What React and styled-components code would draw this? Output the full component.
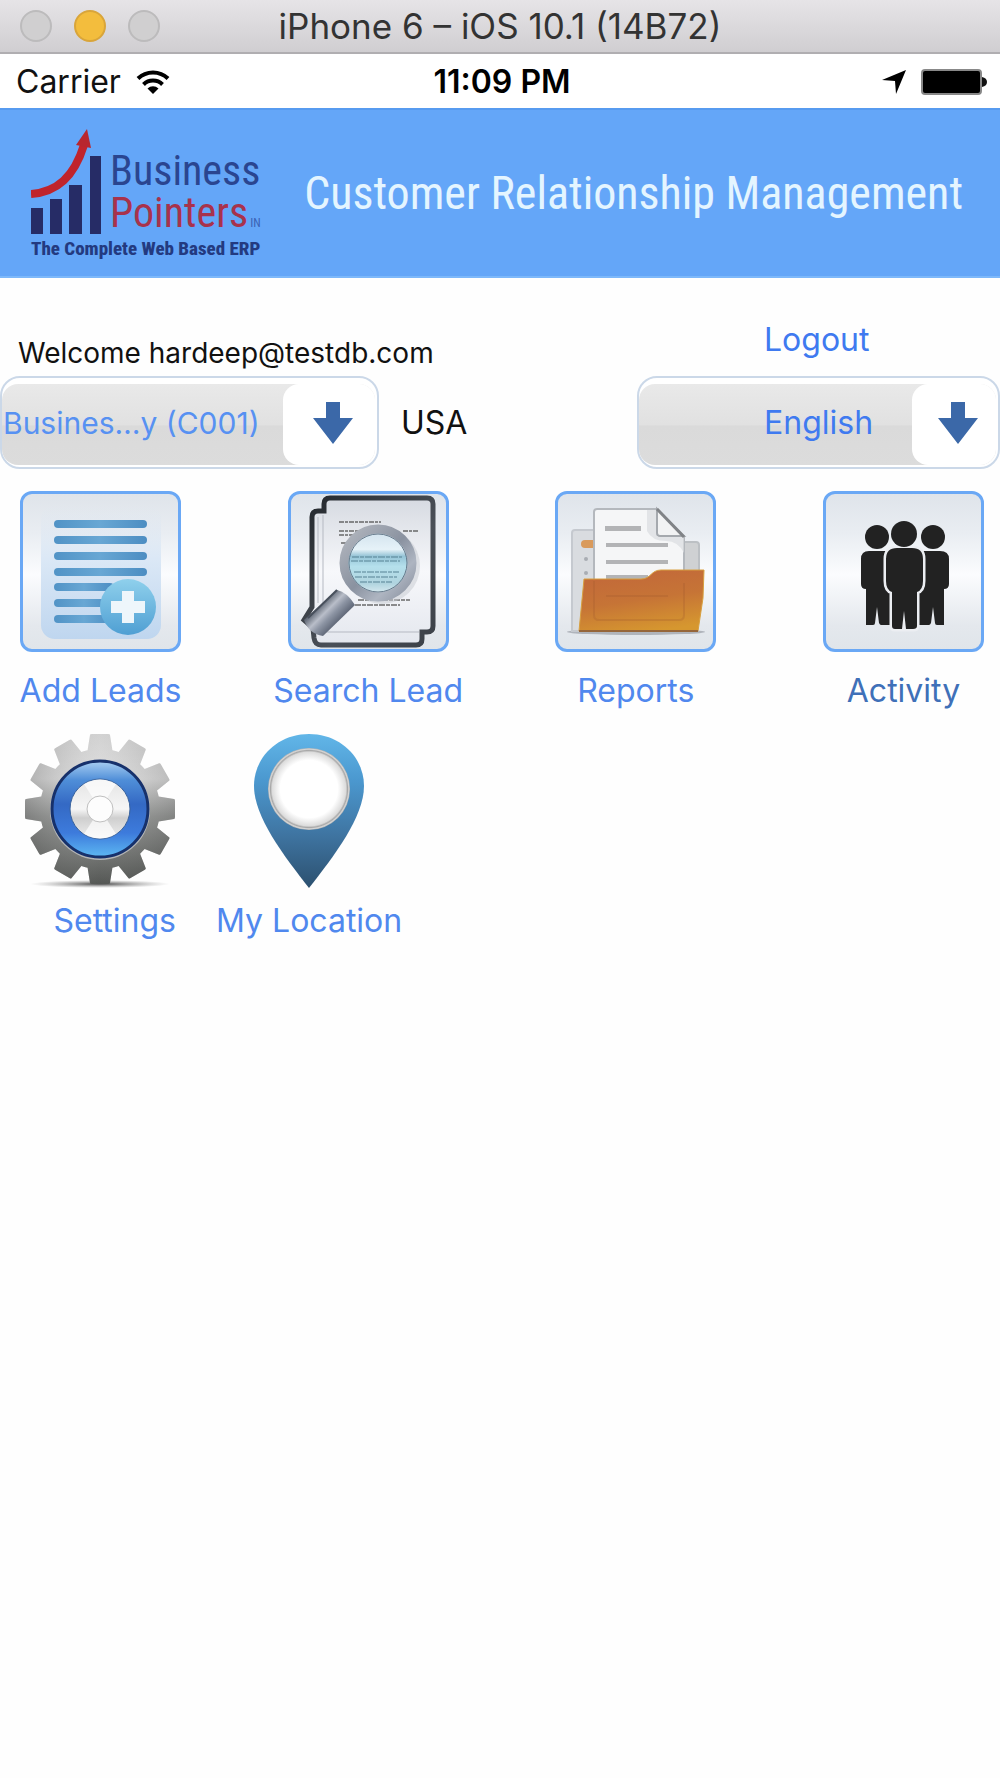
import React from "react";
import styled, { createGlobalStyle } from "styled-components";

const App = () => {
  return (
    <>
      <GlobalStyle />
      <WindowBar>
        <Lights>
          <Light type="button" aria-label="Close" />
          <Light type="button" aria-label="Minimize" $active />
          <Light type="button" aria-label="Zoom" />
        </Lights>
        <WindowTitle>iPhone 6 – iOS 10.1 (14B72)</WindowTitle>
      </WindowBar>

      <StatusBar>
        <StatusSide>
          <span>Carrier</span>
          <WifiIcon />
        </StatusSide>
        <Clock>11:09 PM</Clock>
        <StatusSide $end>
          <LocationIcon />
          <BatteryIcon />
        </StatusSide>
      </StatusBar>

      <Banner>
        <Logo>
          <ChartLogo />
          <Brand>
            <BrandLine $color="#2a4590">Business</BrandLine>
            <BrandLine $color="#a8324c">
              Pointers<small>IN</small>
            </BrandLine>
          </Brand>
          <Tagline>The Complete Web Based ERP</Tagline>
        </Logo>
        <BannerTitle>Customer Relationship Management</BannerTitle>
      </Banner>

      <main>
        <Account>
          <Welcome>Welcome hardeep@testdb.com</Welcome>
          <Logout href="#logout">Logout</Logout>
          <CompanyRow>
            <Picker $width="379px">
              <Select aria-label="Company" $color="#5791f2" $indent="1px" $size="30px">
                <option>Busines…y (C001)</option>
              </Select>
              <PickerArrow width="92px" />
            </Picker>
            <span>USA</span>
          </CompanyRow>
          <Picker $width="100%">
            <Select aria-label="Language" $color="#3f7af0" $indent="125px" $size="32px">
              <option>English</option>
            </Select>
            <PickerArrow width="84px" />
          </Picker>
        </Account>

        <Tiles>
          <Shortcut type="button">
            <Tile>
              <AddLeadsIcon />
            </Tile>
            <Label>Add Leads</Label>
          </Shortcut>
          <Shortcut type="button">
            <Tile>
              <SearchLeadIcon />
            </Tile>
            <Label>Search Lead</Label>
          </Shortcut>
          <Shortcut type="button">
            <Tile>
              <ReportsIcon />
            </Tile>
            <Label>Reports</Label>
          </Shortcut>
          <Shortcut type="button">
            <Tile>
              <ActivityIcon />
            </Tile>
            <Label $color="#3f70b8">Activity</Label>
          </Shortcut>
        </Tiles>

        <MoreRow>
          <PlainShortcut type="button" $align="flex-end">
            <GearIcon />
            <Label>Settings</Label>
          </PlainShortcut>
          <PlainShortcut type="button" $align="center">
            <PinIcon />
            <Label>My Location</Label>
          </PlainShortcut>
        </MoreRow>
      </main>
    </>
  );
};

export default App;

const PickerArrow = ({ width }) => (
  <ArrowBox $width={width}>
    <svg width="42" height="42" viewBox="0 0 42 42" aria-hidden="true">
      <path d="M14 0h14v16h13L21 42 1 16h13z" fill="#3b68a8" />
    </svg>
  </ArrowBox>
);

const WifiIcon = () => (
  <svg width="34" height="26" viewBox="0 0 34 26" aria-hidden="true">
    <g fill="none" stroke="#000" strokeWidth="4">
      <path d="M2 9.500a21.500 21.500 0 0 1 30 0" />
      <path d="M7.500 15.500a13.500 13.500 0 0 1 19 0" />
    </g>
    <path d="M11.500 19.500a8 8 0 0 1 11 0L17 25z" fill="#000" />
  </svg>
);

const LocationIcon = () => (
  <svg width="24" height="24" viewBox="0 0 24 24" aria-hidden="true">
    <path d="M24 0L14 24 13 11 0 10z" fill="#000" />
  </svg>
);

const BatteryIcon = () => (
  <svg width="67" height="26" viewBox="0 0 67 26" aria-hidden="true">
    <rect x="1" y="1" width="59" height="24" rx="3" fill="#000" stroke="#888" strokeWidth="2" />
    <path d="M61 8q5 1 5 5t-5 5z" fill="#111" />
  </svg>
);

const ChartLogo = () => (
  <svg width="74" height="106" viewBox="0 0 74 106" aria-hidden="true">
    <g fill="#262c66">
      <rect x="0" y="79" width="12" height="26" />
      <rect x="19" y="70" width="12" height="35" />
      <rect x="38" y="56" width="13" height="49" />
      <rect x="59" y="27" width="11" height="78" />
    </g>
    <path d="M0 65C26 63 43 48 53 16" fill="none" stroke="#c0242c" strokeWidth="8" />
    <path d="M56 0L45 16l15 3z" fill="#b8262e" />
  </svg>
);

const AddLeadsIcon = () => (
  <svg viewBox="3 3 155 155" aria-hidden="true">
    <defs>
      <linearGradient id="sheet" x1="0" y1="0" x2="0" y2="1">
        <stop offset="0" stopColor="#dde6f0" stopOpacity="0" />
        <stop offset="0.4" stopColor="#dbe8f6" />
        <stop offset="1" stopColor="#bfd6ef" />
      </linearGradient>
      <linearGradient id="rule" x1="0" y1="0" x2="1" y2="0">
        <stop offset="0" stopColor="#5193c6" />
        <stop offset="0.5" stopColor="#68a7d4" />
        <stop offset="1" stopColor="#4c8dc2" />
      </linearGradient>
      <linearGradient id="badge" x1="0" y1="0" x2="0" y2="1">
        <stop offset="0" stopColor="#8fd0ec" />
        <stop offset="1" stopColor="#4f9fd3" />
      </linearGradient>
    </defs>
    <rect x="21" y="14" width="120" height="134" rx="14" fill="url(#sheet)" />
    {[29, 45, 61, 77, 92, 108, 124].map((y, i) => (
      <rect key={y} x="34" y={y} width={i < 4 ? 93 : 60} height="8" rx="4" fill="url(#rule)" />
    ))}
    <circle cx="108" cy="116" r="28" fill="url(#badge)" />
    <path d="M102 100h12v10h11v12h-11v10h-12v-10H91v-12h11z" fill="#eef6fb" />
  </svg>
);

const SearchLeadIcon = () => (
  <svg viewBox="3 3 155 155" aria-hidden="true">
    <defs>
      <linearGradient id="paper" x1="0" y1="0" x2="0" y2="1">
        <stop offset="0" stopColor="#d6dae1" />
        <stop offset="0.5" stopColor="#f7f8fb" />
        <stop offset="1" stopColor="#e4e7ee" />
      </linearGradient>
      <linearGradient id="edge" x1="0" y1="0" x2="1" y2="1">
        <stop offset="0" stopColor="#23272c" />
        <stop offset="0.6" stopColor="#4a5058" />
        <stop offset="1" stopColor="#3c4148" />
      </linearGradient>
      <linearGradient id="ring" x1="0" y1="0" x2="1" y2="1">
        <stop offset="0" stopColor="#b4b8c0" />
        <stop offset="0.5" stopColor="#8a92a0" />
        <stop offset="0.75" stopColor="#aeb5c1" />
        <stop offset="1" stopColor="#8a92a0" />
      </linearGradient>
      <linearGradient id="glass" x1="0" y1="0" x2="0" y2="1">
        <stop offset="0" stopColor="#cfe0ec" />
        <stop offset="0.3" stopColor="#e6f2f8" />
        <stop offset="0.4" stopColor="#94c3d6" />
        <stop offset="0.55" stopColor="#b5e0ec" />
        <stop offset="0.8" stopColor="#b0d4df" />
        <stop offset="1" stopColor="#e8f3f7" />
      </linearGradient>
      <linearGradient id="handle" gradientUnits="userSpaceOnUse" x1="34" y1="112" x2="52" y2="130">
        <stop offset="0" stopColor="#5f6774" />
        <stop offset="0.35" stopColor="#b9bec9" />
        <stop offset="0.6" stopColor="#8d95a4" />
        <stop offset="1" stopColor="#5c6474" />
      </linearGradient>
    </defs>
    <path
      d="M36 20V13q0-6 6-6h97q6 0 6 6v122q0 6-6 6h-5v7q0 6-6 6H33q-6 0-7-7l-1-10-9-8 8-13V26q0-6 6-6z"
      fill="url(#paper)"
      stroke="url(#edge)"
      strokeWidth="5"
    />
    <path d="M35 24v112q0 5 5 5h91M30 26v86" fill="none" stroke="#b5b9c2" strokeWidth="1" />
    <g stroke="#555" strokeWidth="2" opacity="0.65">
      <path d="M51 31h42M51 40h24M115 40h15M51 44h18M53 52h8" strokeDasharray="5 1 3 1" />
      <path d="M70 109h52M67 114h45" strokeDasharray="6 1 4 1" />
    </g>
    <circle cx="94" cy="75" r="38" fill="#c6c9d0" opacity="0.5" />
    <path d="M49 99q10 2 18 15L35 145q-14-2-19-16z" fill="url(#handle)" />
    <path d="M49 99L20 127" stroke="#48505c" strokeWidth="2" />
    <circle cx="90" cy="72" r="34" fill="url(#glass)" stroke="url(#ring)" strokeWidth="9" />
    <circle cx="90" cy="72" r="29" fill="none" stroke="#66798a" strokeWidth="1" />
    <g stroke="#578395" strokeWidth="2" opacity="0.5">
      <path d="M64 66h50M63 70h49M66 81h45M67 86h42M72 91h32" strokeDasharray="7 1 4 1" />
    </g>
  </svg>
);

const ReportsIcon = () => (
  <svg viewBox="3 3 155 155" aria-hidden="true">
    <defs>
      <linearGradient id="folder" x1="0.3" y1="0" x2="0.6" y2="1">
        <stop offset="0" stopColor="#c2683a" />
        <stop offset="0.5" stopColor="#c67436" />
        <stop offset="1" stopColor="#d6972f" />
      </linearGradient>
    </defs>
    <ellipse cx="81" cy="141" rx="69" ry="3" fill="#8d939b" opacity="0.6" />
    <path d="M17 140V42q0-3 3-3h50v101z" fill="#d9dce0" stroke="#c5c9cf" strokeWidth="2" />
    <path d="M120 51h21q3 0 3 3v40h-24z" fill="#cfd1d3" stroke="#bcc0c4" strokeWidth="2" />
    <rect x="26" y="49" width="20" height="8" rx="4" fill="#d99a5c" />
    <circle cx="31" cy="68" r="2" fill="#a9adb3" />
    <circle cx="31" cy="82" r="2" fill="#a9adb3" />
    <path d="M39 120V21q0-3 3-3h59l28 28v74z" fill="#f5f6f7" stroke="#b4b8bd" strokeWidth="2" />
    <path d="M92 19h10v27h27v16q-6-12-18-12-14 0-19-10z" fill="#dadddf" opacity="0.7" />
    <path d="M102 18v24q0 3 3 3h24z" fill="#f2f3f4" stroke="#a5a9ae" strokeWidth="2" />
    <path d="M102 18l27 28" stroke="#808387" strokeWidth="3" />
    <g fill="#b3b4b6">
      <rect x="50" y="35" width="36" height="5" />
      <rect x="51" y="52" width="62" height="4" />
      <rect x="51" y="69" width="62" height="4" />
      <rect x="51" y="84" width="42" height="4" />
    </g>
    <path
      d="M29 88h57c10 0 10-9 20-9h43l-1 28-5 33H24z"
      fill="url(#folder)"
      stroke="#d8a040"
      strokeWidth="1"
    />
    <path d="M39 90v34q0 5 5 5h80q5 0 5-5V92M51 105h62" fill="none" stroke="#a0562c" strokeWidth="2" opacity="0.25" />
    <path d="M24 140h119" stroke="#96663a" strokeWidth="2" />
  </svg>
);

const ActivityIcon = () => (
  <svg viewBox="3 3 155 155" aria-hidden="true">
    <g fill="#222">
      <circle cx="54" cy="46" r="12" />
      <circle cx="110" cy="46" r="12" />
      <path d="M46 60h22v74H58q-1 0-2-2l-2-16-2 16q0 2-2 2h-7V98q-5 0-5-5V68q0-8 8-8z" />
      <path d="M117 60H95v74h11q1 0 2-2l2-16 2 16q0 2 2 2h7V98q5 0 5-5V68q0-8-9-8z" />
    </g>
    <path
      d="M74 57h15q11 0 11 11v22q0 9-6 11v34q0 3-4 3h-7l-2-18-2 18h-7q-3 0-3-3v-34q-6-2-6-11V68q0-11 11-11z"
      fill="#222"
      stroke="#eceef2"
      strokeWidth="5"
      paintOrder="stroke"
    />
    <circle cx="81" cy="43" r="13" fill="#222" />
  </svg>
);

const TOOTH = "M63 20L66 1q0-1 2-1h16q2 0 2 1l3 19z";

const GearIcon = () => (
  <svg width="152" height="154" viewBox="0 0 152 154" aria-hidden="true">
    <defs>
      <linearGradient id="steel" gradientUnits="userSpaceOnUse" x1="0" y1="0" x2="0" y2="150">
        <stop offset="0" stopColor="#cdcdcd" />
        <stop offset="0.3" stopColor="#dcdcdc" />
        <stop offset="0.55" stopColor="#8d8f8d" />
        <stop offset="1" stopColor="#3a3d3a" />
      </linearGradient>
      <linearGradient id="sheen" x1="0" y1="0" x2="1" y2="0">
        <stop offset="0" stopColor="#666" stopOpacity="0.4" />
        <stop offset="0.5" stopColor="#eee" stopOpacity="0.15" />
        <stop offset="1" stopColor="#666" stopOpacity="0.3" />
      </linearGradient>
      <linearGradient id="hub" x1="0" y1="0" x2="0" y2="1">
        <stop offset="0" stopColor="#a9cff2" />
        <stop offset="0.2" stopColor="#4f8ed8" />
        <stop offset="0.45" stopColor="#3469c4" />
        <stop offset="0.75" stopColor="#3d7bdc" />
        <stop offset="1" stopColor="#5db8f2" />
      </linearGradient>
      <linearGradient id="disc" x1="0" y1="0" x2="0" y2="1">
        <stop offset="0" stopColor="#e4e4e4" />
        <stop offset="0.5" stopColor="#f6f6f6" />
        <stop offset="0.65" stopColor="#cfcfcf" />
        <stop offset="1" stopColor="#efefef" />
      </linearGradient>
      <radialGradient id="floor">
        <stop offset="0" stopColor="#222" stopOpacity="0.8" />
        <stop offset="1" stopColor="#777" stopOpacity="0" />
      </radialGradient>
      <clipPath id="gear">
        <circle cx="76" cy="75" r="60" />
        {Array.from({ length: 12 }, (_, i) => (
          <path key={i} d={TOOTH} transform={`rotate(${i * 30} 76 75)`} />
        ))}
      </clipPath>
    </defs>
    <ellipse cx="76" cy="150" rx="70" ry="4" fill="url(#floor)" />
    <g clipPath="url(#gear)">
      <rect width="152" height="154" fill="url(#steel)" />
      <rect width="152" height="154" fill="url(#sheen)" />
    </g>
    <circle cx="76" cy="76" r="50" fill="#d0d2d3" opacity="0.7" />
    <circle cx="76" cy="75" r="48" fill="url(#hub)" stroke="#17316b" strokeWidth="3" />
    <circle cx="76" cy="75" r="30" fill="url(#disc)" stroke="#38629c" strokeWidth="1" />
    <path d="M76 75L60 50q16-9 32 0zM76 75l-16 25q16 9 32 0z" fill="#fff" opacity="0.7" />
    <circle cx="76" cy="75" r="13" fill="#fdfdfd" stroke="#bfbfbf" strokeWidth="1" />
  </svg>
);

const PinIcon = () => (
  <svg width="110" height="154" viewBox="0 0 110 154" aria-hidden="true">
    <defs>
      <linearGradient id="pin" x1="0" y1="0" x2="0" y2="1">
        <stop offset="0" stopColor="#62b6e8" />
        <stop offset="0.3" stopColor="#4b98cf" />
        <stop offset="0.65" stopColor="#3f75a2" />
        <stop offset="1" stopColor="#2c506f" />
      </linearGradient>
      <radialGradient id="dish">
        <stop offset="0.7" stopColor="#fff" />
        <stop offset="0.9" stopColor="#dcdcdc" />
        <stop offset="0.94" stopColor="#a8a8a8" />
        <stop offset="0.97" stopColor="#d6d6d6" />
        <stop offset="1" stopColor="#b4b4b4" />
      </radialGradient>
    </defs>
    <path d="M55 0c31 0 55 23 55 52 0 31-30 70-55 102C30 122 0 83 0 52 0 23 24 0 55 0z" fill="url(#pin)" />
    <circle cx="55" cy="55" r="41" fill="url(#dish)" />
  </svg>
);

const GlobalStyle = createGlobalStyle`
  * {
    box-sizing: border-box;
  }

  body {
    margin: 0;
    min-height: 100vh;
    background: #fefefe;
    color: #111;
    font-family: Inter, "Liberation Sans", sans-serif;
    font-size: 32px;
    line-height: 38px;
  }

  svg {
    display: block;
    flex: none;
  }

  button {
    padding: 0;
    border: 0;
    background: none;
    font: inherit;
    cursor: pointer;
  }
`;

const WindowBar = styled.header`
  display: grid;
  grid-template-columns: 1fr auto 1fr;
  align-items: center;
  height: 54px;
  padding: 0 20px;
  background: linear-gradient(#e6e4e7, #d0ced1);
  border-bottom: 2px solid #b0aeb1;
`;

const Lights = styled.div`
  display: flex;
  gap: 22px;
`;

const Light = styled.button`
  width: 32px;
  height: 32px;
  && {
    border: 2px solid ${(props) => (props.$active ? "#d9a53a" : "#bcbbbc")};
    background: ${(props) => (props.$active ? "#f3bd3d" : "#d0cfd0")};
  }
  border-radius: 50%;
`;

const WindowTitle = styled.div`
  font-size: 35px;
  color: #333;
`;

const StatusBar = styled.div`
  display: grid;
  grid-template-columns: 1fr auto 1fr;
  align-items: center;
  height: 54px;
  padding: 2px 12px 0 16px;
  background: #fff;
`;

const StatusSide = styled.div`
  display: flex;
  align-items: center;
  gap: 15px;
  justify-content: ${(props) => (props.$end ? "flex-end" : "flex-start")};
`;

const Clock = styled.div`
  font-weight: 600;
  color: #000;
`;

const Banner = styled.div`
  display: flex;
  align-items: center;
  justify-content: space-between;
  height: 170px;
  padding: 0 37px 0 31px;
  background: #64a6f8;
  border-top: 2px solid #579bf0;
  border-bottom: 2px solid #7db8fa;
  font-family: "Roboto Condensed", "Open Sans", sans-serif;
`;

const Logo = styled.div`
  display: grid;
  grid-template-columns: 79px auto;
  grid-template-rows: 106px 28px;
  padding-top: 6px;
  white-space: nowrap;
`;

const Brand = styled.div`
  padding-top: 21px;
`;

const BrandLine = styled.div`
  display: flex;
  align-items: baseline;
  gap: 2px;
  height: 42px;
  font-size: 42px;
  line-height: 42px;
  color: ${(props) => props.$color};

  small {
    font-size: 12px;
    line-height: 12px;
    color: #3a62b4;
  }
`;

const Tagline = styled.div`
  grid-column: 1 / -1;
  font-size: 19px;
  line-height: 28px;
  font-weight: 800;
  color: #233a80;
`;

const BannerTitle = styled.h1`
  margin: 0;
  font-size: 46px;
  font-weight: 400;
  color: #e4f5ff;
  white-space: nowrap;
`;

const Account = styled.section`
  display: grid;
  grid-template-columns: 1fr 363px;
  grid-template-rows: 98px auto;
`;

const Welcome = styled.p`
  align-self: end;
  margin: 0;
  padding: 0 0 8px 18px;
  font-size: 28px;
  line-height: 30px;
`;

const Logout = styled.a`
  align-self: end;
  justify-self: start;
  margin-left: 127px;
  padding-bottom: 17px;
  color: #3f7af0;
  text-decoration: none;
`;

const CompanyRow = styled.div`
  display: flex;
  align-items: center;
  gap: 22px;
`;

const Picker = styled.div`
  display: grid;
  width: ${(props) => props.$width};
  height: 93px;
  padding: 6px 2px 2px 0;
  border: 2px solid #cbd8e8;
  border-radius: 20px;
  background: #fff;
`;

const Select = styled.select`
  grid-area: 1 / 1;
  width: 100%;
  appearance: none;
  border: 0;
  border-radius: 16px;
  padding: 0 90px 3px ${(props) => props.$indent};
  background: linear-gradient(#e9e9e9, #e1e1e1 50%, #dadada 52%, #dcdcdc);
  color: ${(props) => props.$color};
  font: inherit;
  font-size: ${(props) => props.$size};
`;

const ArrowBox = styled.span`
  grid-area: 1 / 1;
  justify-self: end;
  display: flex;
  align-items: center;
  justify-content: center;
  width: ${(props) => props.$width};
  padding: 0 0 4px 8px;
  border-radius: 16px;
  background: #fff;
  pointer-events: none;
`;

const Tiles = styled.nav`
  display: flex;
  justify-content: space-between;
  padding: 22px 16px 0 20px;
`;

const Shortcut = styled.button`
  display: flex;
  flex-direction: column;
  align-items: center;
  gap: 20px;
  width: 161px;
`;

const Tile = styled.span`
  display: block;
  width: 161px;
  height: 161px;
  border: 3px solid #6aa8f5;
  border-radius: 12px;
  background: linear-gradient(#dfe4ea, #e9edf2 25%, #fbfcfe 52%, #e4e8ed 85%, #e0e5ea);
  overflow: hidden;
`;

const Label = styled.span`
  color: ${(props) => props.$color || "#5088ee"};
  white-space: nowrap;
`;

const MoreRow = styled.nav`
  display: flex;
  gap: 40px;
  padding: 24px 24px 0;
`;

const PlainShortcut = styled.button`
  display: flex;
  flex-direction: column;
  align-items: ${(props) => props.$align};
  gap: 14px;
`;
